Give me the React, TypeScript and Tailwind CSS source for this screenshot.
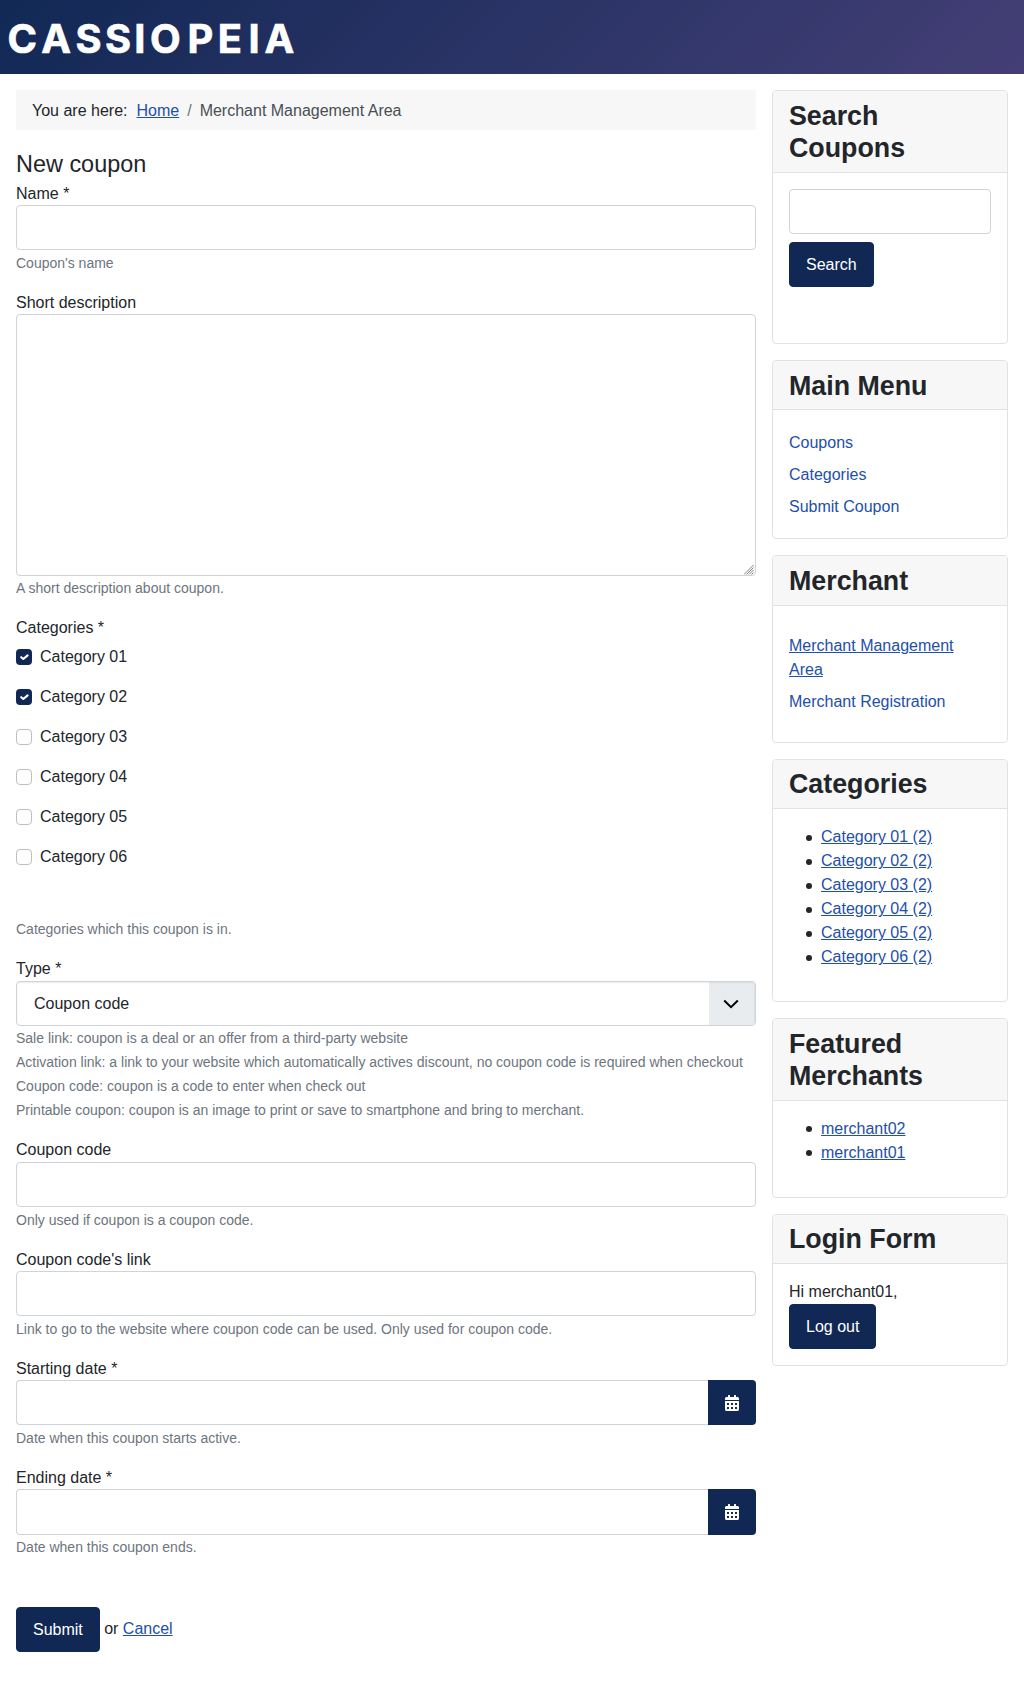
import React from 'react';
import { FaCalendarAlt } from 'react-icons/fa';

const inputClass =
  'block h-[45.2px] w-full rounded-[4px] border border-[#ced4da] bg-white px-4 text-base outline-none';
const buttonClass =
  'inline-flex h-[45.2px] items-center rounded-[4px] border border-[#112855] bg-[#112855] px-4 text-base text-white';
const linkClass = 'text-[#224faa] underline';

function Field({ label, help, children }: { label: string; help: string[]; children: React.ReactNode }) {
  return (
    <div className="mb-4">
      <div className="h-6 pt-[0.6px]">
        <label>{label}</label>
      </div>
      {children}
      {help.map((line) => (
        <div key={line} className="h-6 pt-[0.6px] text-sm leading-6 text-[#6d757e]">
          {line}
        </div>
      ))}
    </div>
  );
}

function Card({ title, children }: { title: string; children: React.ReactNode }) {
  return (
    <section className="rounded-[4px] border border-[#dfe3e7] bg-white">
      <h3 className="rounded-t-[3px] border-b border-[#dfe3e7] bg-[#f7f7f7] px-4 pt-[8.6px] pb-[7.4px] text-[26.8px] leading-[32.4px] font-bold">
        {title}
      </h3>
      <div className="p-4">{children}</div>
    </section>
  );
}

function Checkbox({ checked, label }: { checked: boolean; label: string }) {
  return (
    <label className="flex h-10 items-start gap-2">
      {checked ? (
        <span className="mt-1 size-4 rounded-[4px] bg-[#112855]">
          <svg viewBox="0 0 16 16" className="size-4">
            <path
              fill="none"
              stroke="#fff"
              strokeLinecap="round"
              strokeLinejoin="round"
              strokeWidth="2.1"
              d="M5.2 8.2 7.3 10 11.6 6.4"
            />
          </svg>
        </span>
      ) : (
        <span className="mt-1 size-4 rounded-[4px] border border-[#bfbfbf] bg-white" />
      )}
      <span className="leading-6">{label}</span>
    </label>
  );
}

function DateInput() {
  return (
    <div className="flex">
      <input className="h-[45.2px] min-w-0 flex-1 rounded-l-[4px] border border-r-0 border-[#ced4da] bg-white px-4 outline-none" />
      <button className="flex h-[45.2px] w-12 items-center justify-center rounded-r-[4px] bg-[#112855] pb-[0.4px] text-white">
        <FaCalendarAlt size={16} />
      </button>
    </div>
  );
}

function BulletList({ items }: { items: string[] }) {
  return (
    <ul className="mb-4 pl-[18px]">
      {items.map((item) => (
        <li key={item} className="flex h-6 items-center">
          <span className="mt-px mr-[9px] -ml-px size-1.5 rounded-full bg-[#22262a]" />
          <a href="#" className={linkClass}>{item}</a>
        </li>
      ))}
    </ul>
  );
}

const categories = ['Category 01', 'Category 02', 'Category 03', 'Category 04', 'Category 05', 'Category 06'];

export default function App() {
  return (
    <div className="min-h-[1684px] bg-white font-['Liberation_Sans',Arial,sans-serif] text-base leading-6 text-[#22262a]">
      <header className="h-[74px] bg-linear-[135deg] from-[#112855] to-[#443f76]">
        <svg width="304" height="74" role="img" aria-label="CASSIOPEIA">
          <text
            x="7.6 41.3 75.4 104.9 134.2 149.9 187.4 217.8 248.6 264.4"
            y="53.4"
            fill="#fff"
            stroke="#fff"
            strokeWidth="0.7"
            fontFamily="Inter, sans-serif"
            fontWeight="700"
            fontSize="39.8"
          >
            CASSIOPEIA
          </text>
        </svg>
      </header>

      <div className="grid grid-cols-[740px_236px] items-start gap-4 px-4 pt-4">
        <main>
          <nav className="flex h-10 items-center bg-[#f7f7f7] px-4 pt-[2px]">
            <span>You are here:</span>
            <a href="#" className={`ml-[9px] ${linkClass}`}>Home</a>
            <span className="px-2 text-[#6d757e]">/</span>
            <span className="text-[#484f56]">Merchant Management Area</span>
          </nav>

          <form className="mt-[15.2px]">
            <h2 className="h-9 pt-[0.8px] text-[23.45px] leading-9">New coupon</h2>
            <Field label="Name *" help={["Coupon's name"]}>
              <input className={inputClass} />
            </Field>
            <Field label="Short description" help={['A short description about coupon.']}>
              <div className="relative h-[261.4px]">
                <textarea className="block h-full w-full resize-none rounded-[4px] border border-[#ced4da] bg-white px-4 outline-none" />
                <svg className="pointer-events-none absolute right-[2px] bottom-[1px]" width="10" height="10" viewBox="0 0 10 10">
                  <path
                    d="M0 9.5 9.5 0M2.5 9.5 9.5 2.5M5 9.5 9.5 5M7.5 9.5 9.5 7.5"
                    stroke="#6f6f6f"
                    strokeWidth="0.9"
                    fill="none"
                  />
                </svg>
              </div>
            </Field>
            <Field label="Categories *" help={['Categories which this coupon is in.']}>
              <div className="h-[276.8px] pt-[5px]">
                {categories.map((c, i) => (
                  <Checkbox key={c} label={c} checked={i < 2} />
                ))}
              </div>
            </Field>
            <Field
              label="Type *"
              help={[
                'Sale link: coupon is a deal or an offer from a third-party website',
                'Activation link: a link to your website which automatically actives discount, no coupon code is required when checkout',
                'Coupon code: coupon is a code to enter when check out',
                'Printable coupon: coupon is an image to print or save to smartphone and bring to merchant.',
              ]}
            >
              <div className="flex h-[45.2px] items-stretch justify-between overflow-hidden rounded-[4px] border border-[#ced4da] shadow-[inset_0_1px_2px_rgba(0,0,0,0.075)]">
                <span className="flex items-center pt-px pl-[17px]">Coupon code</span>
                <span className="flex w-[46px] items-center justify-center bg-[#e9ecef] shadow-[inset_-1px_1px_2px_rgba(0,0,0,0.06)]">
                  <svg width="16" height="10" viewBox="0 0 16 10" className="mt-px mr-[2px]">
                    <path d="M1.2 1.5 8 8.2 14.8 1.5" fill="none" stroke="#000" strokeWidth="2" />
                  </svg>
                </span>
              </div>
            </Field>
            <Field label="Coupon code" help={['Only used if coupon is a coupon code.']}>
              <input className={inputClass} />
            </Field>
            <Field
              label="Coupon code's link"
              help={['Link to go to the website where coupon code can be used. Only used for coupon code.']}
            >
              <input className={inputClass} />
            </Field>
            <Field label="Starting date *" help={['Date when this coupon starts active.']}>
              <DateInput />
            </Field>
            <Field label="Ending date *" help={['Date when this coupon ends.']}>
              <DateInput />
            </Field>
            <div className="mt-[48.4px] flex items-center">
              <button type="button" className={`pt-px ${buttonClass}`}>Submit</button>
              <span className="-mt-px ml-[4.4px]">
                or <a href="#" className={linkClass}>Cancel</a>
              </span>
            </div>
          </form>
        </main>

        <aside className="flex flex-col gap-4">
          <Card title="Search Coupons">
            <div className="h-[138.2px]">
              <input className={inputClass} />
              <button className={`mt-2 ${buttonClass}`}>Search</button>
            </div>
          </Card>
          <Card title="Main Menu">
            <ul className="h-24 pt-[0.4px]">
              {['Coupons', 'Categories', 'Submit Coupon'].map((item) => (
                <li key={item} className="py-1">
                  <a href="#" className="text-[#224faa]">{item}</a>
                </li>
              ))}
            </ul>
          </Card>
          <Card title="Merchant">
            <ul className="py-2 pr-4">
              <li className="py-1">
                <a href="#" className={linkClass}>Merchant Management Area</a>
              </li>
              <li className="py-1">
                <a href="#" className="text-[#224faa]">Merchant Registration</a>
              </li>
            </ul>
          </Card>
          <Card title="Categories">
            <BulletList items={categories.map((c) => `${c} (2)`)} />
          </Card>
          <div className="-mb-[0.4px]">
            <Card title="Featured Merchants">
              <BulletList items={['merchant02', 'merchant01']} />
            </Card>
          </div>
          <Card title="Login Form">
            <div className="h-6">Hi merchant01,</div>
            <div className="h-[45px]">
              <button className={buttonClass}>Log out</button>
            </div>
          </Card>
        </aside>
      </div>
    </div>
  );
}
